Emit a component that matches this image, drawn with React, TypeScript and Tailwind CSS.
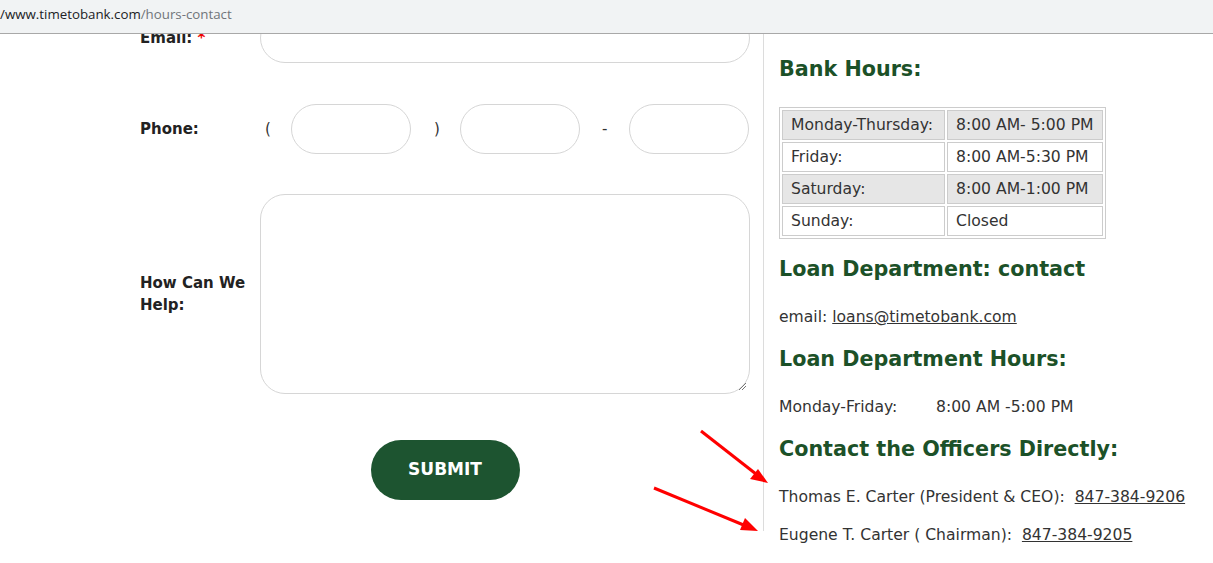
import React from "react";

const font = { fontFamily: '"DejaVu Sans", "Noto Sans", sans-serif' };

function PillInput({ className = "" }: { className?: string }) {
  return <div className={`h-[50px] rounded-[25px] border border-[#d6d6d6] bg-white ${className}`} />;
}

export default function App() {
  return (
    <div className="relative h-[563px] w-[1213px] overflow-hidden bg-white text-[#333]" style={font}>
      {/* address bar */}
      <div className="flex h-[34px] items-center border-b border-[#a8a8a8] bg-[#f1f3f4] pb-[3px] text-[13.3px]" style={{ fontFamily: '"Open Sans", sans-serif' }}>
        <span className="text-[#202124]">/www.timetobank.com</span>
        <span className="text-[#70757a]">/hours-contact</span>
      </div>

      <div className="flex h-[529px] items-start">
        {/* left form */}
        <div className="h-[497px] w-[764px] shrink-0 overflow-hidden border-r border-[#dcdcdc]">
          <div className="-mt-[21px] ml-[140px] w-[610px]">
            <div className="flex items-center">
              <div className="w-[120px] text-[15px] font-semibold text-[#222]">
                Email: <span className="text-[#e00]">*</span>
              </div>
              <PillInput className="w-[490px]" />
            </div>
            <div className="mt-[41px] flex items-center">
              <div className="w-[120px] text-[15px] font-semibold text-[#222]">Phone:</div>
              <div className="flex w-[490px] items-center">
                <span className="w-[31px] pl-[5px] text-[15px]">(</span>
                <PillInput className="w-[120px]" />
                <span className="w-[49px] pl-[23px] text-[15px]">)</span>
                <PillInput className="w-[120px]" />
                <span className="w-[49px] pl-[22px] text-[15px]">-</span>
                <PillInput className="w-[120px]" />
              </div>
            </div>
            <div className="mt-[40px] flex items-center">
              <div className="w-[120px] text-[15px] font-semibold leading-[22px] text-[#222]">
                How Can We
                <br />
                Help:
              </div>
              <div className="relative h-[200px] w-[490px] rounded-[25px] border border-[#d6d6d6]">
                <svg className="absolute bottom-[3px] right-[3px]" width="8" height="8" viewBox="0 0 8 8">
                  <path d="M1 8 L8 1 M4 8 L8 4" stroke="#777" strokeWidth="1" />
                </svg>
              </div>
            </div>
            <div className="mt-[46px] flex justify-center">
              <button className="h-[60px] w-[149px] rounded-full bg-[#1d5430] text-[17px] font-bold text-white">
                SUBMIT
              </button>
            </div>
          </div>
        </div>

        {/* right column */}
        <div className="pl-[15px] pt-[20px] text-[15.6px]">
          <h2 className="text-[20.7px] font-bold leading-[30px] text-[#1c5128]">Bank Hours:</h2>
          <table className="mt-[23px] border-separate border-spacing-[2px] border border-[#ccc] leading-[28px]">
            <tbody>
              {[
                ["Monday-Thursday:", "8:00 AM- 5:00 PM", true],
                ["Friday:", "8:00 AM-5:30 PM", false],
                ["Saturday:", "8:00 AM-1:00 PM", true],
                ["Sunday:", "Closed", false],
              ].map(([d, h, g]) => (
                <tr key={d as string}>
                  <td className={`w-[163px] whitespace-nowrap border border-[#ccc] px-[8px] ${g ? "bg-[#e6e6e6]" : ""}`}>{d}</td>
                  <td className={`w-[156px] whitespace-nowrap border border-[#ccc] px-[8px] ${g ? "bg-[#e6e6e6]" : ""}`}>{h}</td>
                </tr>
              ))}
            </tbody>
          </table>
          <h2 className="mt-[15px] text-[20.7px] font-bold leading-[30px] text-[#1c5128]">Loan Department: contact</h2>
          <p className="mt-[21px] leading-[24px]">
            email: <span className="underline">loans@timetobank.com</span>
          </p>
          <h2 className="mt-[15px] text-[20.7px] font-bold leading-[30px] text-[#1c5128]">Loan Department Hours:</h2>
          <p className="mt-[21px] leading-[24px]">
            <span className="inline-block w-[157px]">Monday-Friday:</span>8:00 AM -5:00 PM
          </p>
          <h2 className="mt-[15px] text-[20.7px] font-bold leading-[30px] text-[#1c5128]">Contact the Officers Directly:</h2>
          <p className="mt-[21px] whitespace-nowrap leading-[24px]">
            Thomas E. Carter (President &amp; CEO):&nbsp; <span className="underline">847-384-9206</span>
          </p>
          <p className="mt-[14px] whitespace-nowrap leading-[24px]">
            Eugene T. Carter ( Chairman):&nbsp; <span className="underline">847-384-9205</span>
          </p>
        </div>
      </div>

      {/* red arrows overlay */}
      <svg className="pointer-events-none absolute left-0 top-0" width="1213" height="563">
        <line x1="701" y1="431" x2="756" y2="474" stroke="#ff0000" strokeWidth="3" />
        <path d="M768 483 L750 479 L758 469 Z" fill="#ff0000" />
        <line x1="654" y1="488" x2="746" y2="526" stroke="#ff0000" strokeWidth="3" />
        <path d="M758 531 L740 530 L745 518 Z" fill="#ff0000" />
      </svg>
    </div>
  );
}
